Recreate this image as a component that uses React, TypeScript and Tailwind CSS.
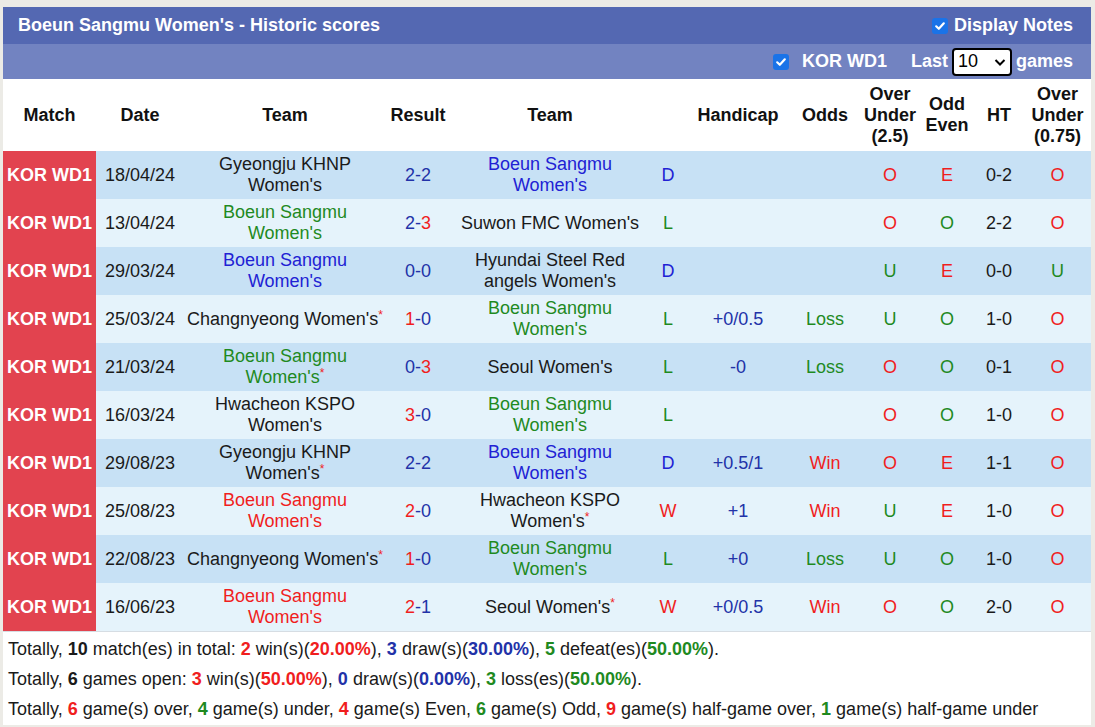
import React from "react";

const C = {
  blue: "text-[#2121d4]",
  dblue: "text-[#2232a8]",
  green: "text-[#1f8a1f]",
  red: "text-[#f01e1e]",
  black: "text-[#1a1a1a]",
};

type Team = { name: string; color: string; star?: boolean };
type Row = {
  date: string;
  t1: Team;
  t2: Team;
  s1: string;
  s2: string;
  s1c: string;
  s2c: string;
  r: string;
  hc: string;
  odds: string;
  ou: string;
  oe: string;
  ht: string;
  ou2: string;
};

const BS = "Boeun Sangmu Women's";

const rows: Row[] = [
  { date: "18/04/24", t1: { name: "Gyeongju KHNP Women's", color: C.black }, t2: { name: BS, color: C.blue }, s1: "2", s2: "2", s1c: C.dblue, s2c: C.dblue, r: "D", hc: "", odds: "", ou: "O", oe: "E", ht: "0-2", ou2: "O" },
  { date: "13/04/24", t1: { name: BS, color: C.green }, t2: { name: "Suwon FMC Women's", color: C.black }, s1: "2", s2: "3", s1c: C.dblue, s2c: C.red, r: "L", hc: "", odds: "", ou: "O", oe: "O", ht: "2-2", ou2: "O" },
  { date: "29/03/24", t1: { name: BS, color: C.blue }, t2: { name: "Hyundai Steel Red angels Women's", color: C.black }, s1: "0", s2: "0", s1c: C.dblue, s2c: C.dblue, r: "D", hc: "", odds: "", ou: "U", oe: "E", ht: "0-0", ou2: "U" },
  { date: "25/03/24", t1: { name: "Changnyeong Women's", color: C.black, star: true }, t2: { name: BS, color: C.green }, s1: "1", s2: "0", s1c: C.red, s2c: C.dblue, r: "L", hc: "+0/0.5", odds: "Loss", ou: "U", oe: "O", ht: "1-0", ou2: "O" },
  { date: "21/03/24", t1: { name: BS, color: C.green, star: true }, t2: { name: "Seoul Women's", color: C.black }, s1: "0", s2: "3", s1c: C.dblue, s2c: C.red, r: "L", hc: "-0", odds: "Loss", ou: "O", oe: "O", ht: "0-1", ou2: "O" },
  { date: "16/03/24", t1: { name: "Hwacheon KSPO Women's", color: C.black }, t2: { name: BS, color: C.green }, s1: "3", s2: "0", s1c: C.red, s2c: C.dblue, r: "L", hc: "", odds: "", ou: "O", oe: "O", ht: "1-0", ou2: "O" },
  { date: "29/08/23", t1: { name: "Gyeongju KHNP Women's", color: C.black, star: true }, t2: { name: BS, color: C.blue }, s1: "2", s2: "2", s1c: C.dblue, s2c: C.dblue, r: "D", hc: "+0.5/1", odds: "Win", ou: "O", oe: "E", ht: "1-1", ou2: "O" },
  { date: "25/08/23", t1: { name: BS, color: C.red }, t2: { name: "Hwacheon KSPO Women's", color: C.black, star: true }, s1: "2", s2: "0", s1c: C.red, s2c: C.dblue, r: "W", hc: "+1", odds: "Win", ou: "U", oe: "E", ht: "1-0", ou2: "O" },
  { date: "22/08/23", t1: { name: "Changnyeong Women's", color: C.black, star: true }, t2: { name: BS, color: C.green }, s1: "1", s2: "0", s1c: C.red, s2c: C.dblue, r: "L", hc: "+0", odds: "Loss", ou: "U", oe: "O", ht: "1-0", ou2: "O" },
  { date: "16/06/23", t1: { name: BS, color: C.red }, t2: { name: "Seoul Women's", color: C.black, star: true }, s1: "2", s2: "1", s1c: C.red, s2c: C.dblue, r: "W", hc: "+0/0.5", odds: "Win", ou: "O", oe: "O", ht: "2-0", ou2: "O" },
];

const grid =
  "grid grid-cols-[93px_88px_202px_64px_200px_36px_104px_70px_60px_54px_50px_67px]";
const cell = "flex items-center justify-center text-center";

const rColor = (r: string) => (r === "W" ? C.red : r === "L" ? C.green : C.blue);
const ouColor = (v: string) => (v === "O" ? C.red : C.green);
const oeColor = (v: string) => (v === "E" ? C.red : C.green);
const oddsColor = (v: string) => (v === "Win" ? C.red : C.green);

function CheckBox() {
  return (
    <div className="w-[16px] h-[16px] rounded-[3px] bg-[#1a73e8] flex items-center justify-center">
      <svg width="12" height="12" viewBox="0 0 12 12">
        <path d="M2.2 6.3 L4.8 8.8 L9.8 3.3" stroke="white" strokeWidth="2.2" fill="none" strokeLinecap="round" strokeLinejoin="round" />
      </svg>
    </div>
  );
}

function TeamCell({ t, pad }: { t: Team; pad: string }) {
  return (
    <div className={`${cell} ${pad}`}>
      <span className={t.color}>
        {t.name}
        {t.star && <span className={`${C.red} text-[12px] leading-[12px] align-top`}>*</span>}
      </span>
    </div>
  );
}

export default function App() {
  return (
    <div className="w-[1095px] h-[727px] bg-[#ecebe6] pt-[7px] pl-[3px] font-['Liberation_Sans',Arial,sans-serif] text-[18px] leading-[21px] text-[#1a1a1a] overflow-hidden">
      <div className="w-[1088px] bg-white">
        {/* Title bar */}
        <div className="h-[37px] bg-[#5468b2] flex items-center justify-between pl-[15px] pr-[18px] text-white font-bold">
          <span>Boeun Sangmu Women's - Historic scores</span>
          <div className="flex items-center gap-[6px]">
            <CheckBox />
            <span>Display Notes</span>
          </div>
        </div>
        {/* Filter bar */}
        <div className="h-[35px] bg-[#7283c1] flex items-center justify-end pr-[18px] text-white font-bold">
          <CheckBox />
          <span className="ml-[13px]">KOR WD1</span>
          <span className="ml-[24px]">Last</span>
          <div className="ml-[4px] h-[28px] w-[60px] bg-white border-2 border-black rounded-[4px] flex items-center justify-between pl-[4px] pr-[3px] text-black font-normal">
            <span>10</span>
            <svg width="14" height="14" viewBox="0 0 14 14">
              <path d="M2.5 5 L7 9.5 L11.5 5" stroke="black" strokeWidth="2" fill="none" />
            </svg>
          </div>
          <span className="ml-[4px]">games</span>
        </div>
        {/* Header */}
        <div className={`${grid} h-[72px] font-bold text-[#111]`}>
          <div className={cell}>Match</div>
          <div className={cell}>Date</div>
          <div className={cell}>Team</div>
          <div className={cell}>Result</div>
          <div className={cell}>Team</div>
          <div className={cell}></div>
          <div className={cell}>Handicap</div>
          <div className={cell}>Odds</div>
          <div className={cell}>
            Over
            <br />
            Under
            <br />
            (2.5)
          </div>
          <div className={cell}>
            Odd
            <br />
            Even
          </div>
          <div className={cell}>HT</div>
          <div className={cell}>
            Over
            <br />
            Under
            <br />
            (0.75)
          </div>
        </div>
        {/* Rows */}
        {rows.map((r, i) => (
          <div key={i} className={`${grid} h-[48px] ${i % 2 === 0 ? "bg-[#c7e1f5]" : "bg-[#e5f3fb]"}`}>
            <div className={`${cell} bg-[#e2434f] text-white font-bold`}>KOR WD1</div>
            <div className={cell}>{r.date}</div>
            <TeamCell t={r.t1} pad="px-[3px]" />
            <div className={cell}>
              <span className={r.s1c}>{r.s1}</span>
              <span className={C.dblue}>-</span>
              <span className={r.s2c}>{r.s2}</span>
            </div>
            <TeamCell t={r.t2} pad="px-[2px]" />
            <div className={`${cell} ${rColor(r.r)}`}>{r.r}</div>
            <div className={`${cell} ${C.dblue}`}>{r.hc}</div>
            <div className={`${cell} ${oddsColor(r.odds)}`}>{r.odds}</div>
            <div className={`${cell} ${ouColor(r.ou)}`}>{r.ou}</div>
            <div className={`${cell} ${oeColor(r.oe)}`}>{r.oe}</div>
            <div className={cell}>{r.ht}</div>
            <div className={`${cell} ${ouColor(r.ou2)}`}>{r.ou2}</div>
          </div>
        ))}
        {/* Footer */}
        <div className="border-t border-[#d6dde3] pl-[5px] pt-[2px] pb-[1px]">
          <div className="h-[30px] flex items-center">
            <span>
              Totally, <b>10</b> match(es) in total: <b className={C.red}>2</b> win(s)(
              <b className={C.red}>20.00%</b>), <b className={C.dblue}>3</b> draw(s)(
              <b className={C.dblue}>30.00%</b>), <b className={C.green}>5</b> defeat(es)(
              <b className={C.green}>50.00%</b>).
            </span>
          </div>
          <div className="h-[30px] flex items-center">
            <span>
              Totally, <b>6</b> games open: <b className={C.red}>3</b> win(s)(
              <b className={C.red}>50.00%</b>), <b className={C.dblue}>0</b> draw(s)(
              <b className={C.dblue}>0.00%</b>), <b className={C.green}>3</b> loss(es)(
              <b className={C.green}>50.00%</b>).
            </span>
          </div>
          <div className="h-[30px] flex items-center">
            <span>
              Totally, <b className={C.red}>6</b> game(s) over, <b className={C.green}>4</b> game(s) under,{" "}
              <b className={C.red}>4</b> game(s) Even, <b className={C.green}>6</b> game(s) Odd,{" "}
              <b className={C.red}>9</b> game(s) half-game over, <b className={C.green}>1</b> game(s) half-game under
            </span>
          </div>
        </div>
      </div>
    </div>
  );
}
